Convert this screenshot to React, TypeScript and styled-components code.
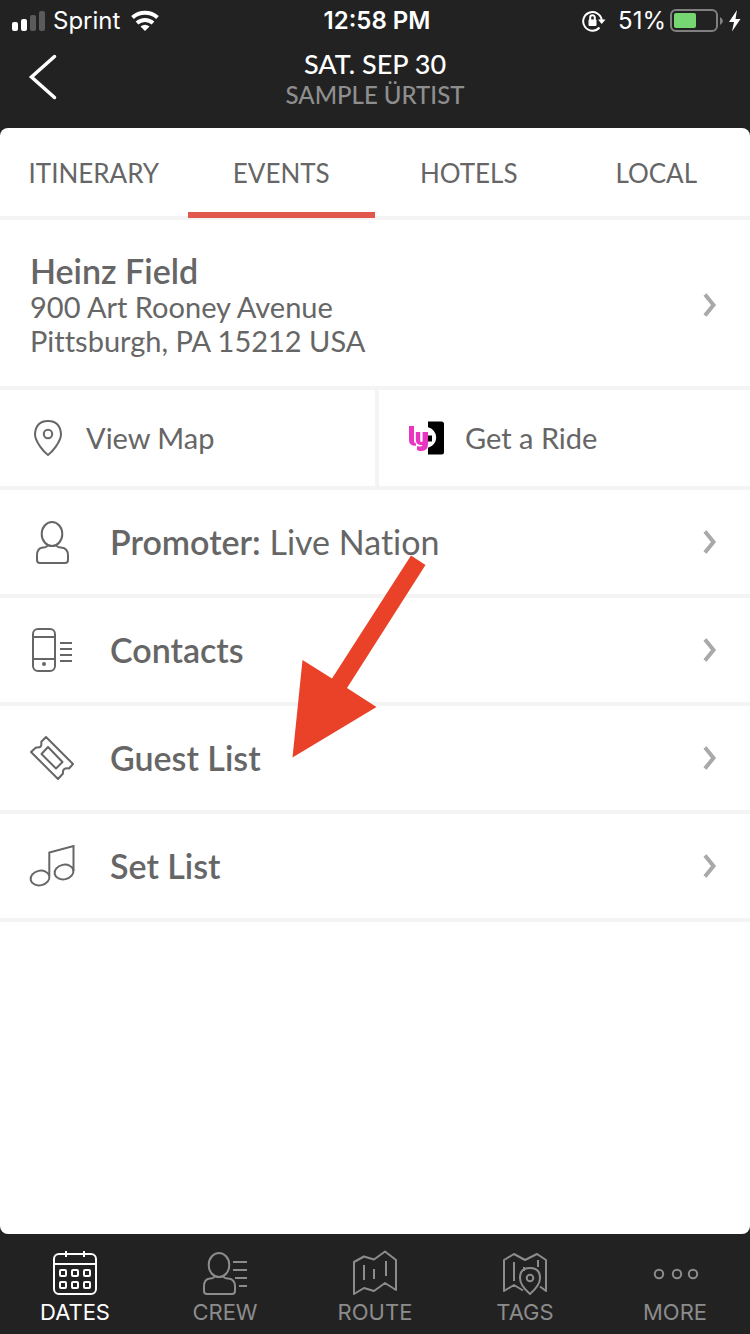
import React from "react";
import styled, { createGlobalStyle } from "styled-components";

const GlobalStyle = createGlobalStyle`
  * { box-sizing: border-box; }
  body {
    margin: 0;
    background: #222;
    color: #666;
    font-family: Lato, "Liberation Sans", sans-serif;
    font-variant-ligatures: none;
  }
  a { color: inherit; text-decoration: none; }
  svg { display: block; flex: none; }
`;

const Screen = styled.div`
  display: flex;
  flex-direction: column;
  min-height: 100vh;
`;

const StatusBar = styled.div`
  display: grid;
  grid-template-columns: 1fr auto 1fr;
  align-items: center;
  height: 40px;
  padding: 2px 8px 0 12px;
  color: #fff;
  font: 400 24px/38px Inter, sans-serif;
`;

const StatusGroup = styled.div<{ $end?: boolean }>`
  display: flex;
  align-items: center;
  gap: ${(p) => (p.$end ? 4 : 8)}px;
  justify-content: ${(p) => (p.$end ? "flex-end" : "flex-start")};
`;

const Clock = styled.time`
  font-weight: 600;
`;

const BatteryLevel = styled.span`
  padding-left: 8px;
`;

const Header = styled.header`
  display: grid;
  grid-template-columns: 1fr auto 1fr;
  height: 88px;
  padding: 8px 28px 0;
`;

const BackButton = styled.button`
  justify-self: start;
  align-self: start;
  padding: 6px 0;
  border: 0;
  background: none;
  color: #fff;
`;

const Heading = styled.div`
  text-align: center;
`;

const Title = styled.h1`
  margin: 0;
  color: #fff;
  font-size: 27px;
  font-weight: 500;
  line-height: 32px;
`;

const Subtitle = styled.p`
  margin: 0;
  color: #8e8e8e;
  font-size: 24px;
  font-weight: 500;
  line-height: 30px;
`;

const Panel = styled.main`
  flex: 1;
  border-radius: 8px;
  background: #fff;
  overflow: hidden;
`;

const Tabs = styled.div`
  display: flex;
  height: 92px;
  border-bottom: 4px solid #f4f4f4;
`;

const Tab = styled.button<{ $active?: boolean }>`
  flex: 1 1 0;
  height: 90px;
  padding: 6px 0 0;
  border: 0;
  border-bottom: 6px solid ${(p) => (p.$active ? "#e2574c" : "transparent")};
  background: none;
  color: #666;
  font: 400 26px/32px Lato, sans-serif;
`;

const Venue = styled.a`
  display: flex;
  align-items: center;
  justify-content: space-between;
  padding: 32px 32px 28px 30px;
  border-bottom: 4px solid #f4f4f4;
`;

const VenueName = styled.h2`
  margin: 0;
  font-size: 34px;
  font-weight: 600;
  line-height: 38px;
`;

const Address = styled.address`
  font-size: 29px;
  font-style: normal;
  line-height: 34px;
`;

const Actions = styled.div`
  display: grid;
  grid-template-columns: 1fr 1fr;
  border-bottom: 4px solid #f4f4f4;
`;

const Action = styled.a`
  display: flex;
  align-items: center;
  gap: 20px;
  height: 96px;
  padding-left: 30px;
  font-size: 29px;
  line-height: 34px;

  & + & {
    border-left: 4px solid #f4f4f4;
  }
`;

const List = styled.nav`
  position: relative;
`;

const Row = styled.a`
  display: flex;
  align-items: center;
  height: 108px;
  padding: 0 32px 0 28px;
  border-bottom: 4px solid #f4f4f4;
`;

const RowLabel = styled.span`
  flex: 1;
  padding-left: 34px;
  font-size: 34px;
  font-weight: 600;
  line-height: 40px;
`;

const RowValue = styled.span`
  font-weight: 400;
`;

const Pointer = styled.svg`
  position: absolute;
  top: 64px;
  left: 290px;
  pointer-events: none;
`;

const TabBar = styled.nav`
  display: flex;
  height: 100px;
`;

const TabBarItem = styled.a<{ $active?: boolean }>`
  flex: 1 1 0;
  display: flex;
  flex-direction: column;
  align-items: center;
  padding-top: 16px;
  color: ${(p) => (p.$active ? "#fff" : "#8c8c8c")};
  font: 400 22px/28px Inter, sans-serif;
`;

const Icon = ({ children, size = 48, weight = 2 }: { children: React.ReactNode; size?: number; weight?: number }) => (
  <svg width={size} height={size} viewBox={`0 0 ${size} ${size}`} fill="none" stroke="currentColor" strokeWidth={weight} aria-hidden="true">
    {children}
  </svg>
);

const Chevron = () => (
  <svg width="16" height="28" viewBox="0 0 16 28" fill="none" stroke="#a9a9a9" strokeWidth="4" aria-hidden="true">
    <path d="M3 3.5 11.5 14 3 24.5" />
  </svg>
);

const PersonIcon = () => (
  <Icon>
    <ellipse cx="24" cy="16" rx="10.3" ry="12" />
    <path d="M20 27q-1 2.500-5 2.500-6 .500-6 8v4.500q0 3 3 3h25q3 0 3-3v-4.500q0-7.500-7-8-4 0-5-2.500" />
  </Icon>
);

const PhoneIcon = () => (
  <Icon>
    <rect x="5" y="3" width="22" height="42" rx="5" />
    <path d="M5 11h22M5 33h22M32 17h12M32 23h12M32 29h12M32 35h12" />
    <circle cx="16" cy="38" r="2" fill="currentColor" stroke="none" />
  </Icon>
);

const TicketIcon = () => (
  <Icon>
    <path strokeLinejoin="round" d="M18 3 45 30l-4 4.500q-3.500-.5-5 .8-1.400 1.400-1 4.200L30 45 3 18l5-4.500q3.500.3 4.500-.7 1.200-1.200.8-5Z" />
    <path strokeLinejoin="round" d="m20 13-6.500 7L28 34.500l6.500-6.500Z" />
  </Icon>
);

const MusicIcon = () => (
  <Icon>
    <ellipse cx="12" cy="36" rx="9.500" ry="7.300" transform="rotate(-12 12 36)" />
    <ellipse cx="36" cy="30" rx="9.500" ry="7.300" transform="rotate(-12 36 30)" />
    <path d="M21.300 34V10.500L45.500 4v25" />
  </Icon>
);

const PinIcon = () => (
  <Icon size={36}>
    <path strokeLinejoin="round" d="M18 35C14.500 32.500 5 22 5 14Q6 1 18 1t13 13c0 8-9.500 18.500-13 21Z" />
    <circle cx="18" cy="14" r="4.200" />
  </Icon>
);

const RideIcon = () => (
  <Icon size={36}>
    <path d="M19 1.500h13.500q2.500 0 2.500 2.500v28q0 2.500-2.500 2.500H19v-6.800a10.500 10.500 0 0 0 0-20.500Z" fill="#000" stroke="none" />
    <path d="M17 15.500h6v6h-6Z" fill="#000" stroke="none" />
    <path d="M0 6h5v15q0 2 2 2.500v2.300Q0 26 0 20ZM6.800 12h4.400v8.500q0 1.500 1.200 1.500t1.200-1.500V12H19v12q0 7-6.500 7-4 0-4.500-1.500V26q5 1.500 5.500-1-6.700.5-6.700-5.500Z" fill="#ea35c0" stroke="none" />
  </Icon>
);

const CalendarIcon = () => (
  <Icon>
    <rect x="3" y="4" width="42" height="40" rx="5" />
    <path d="M3 14h42M15 1v6M33 1v6" />
    {[9, 21, 33].map((x) => (
      <React.Fragment key={x}>
        <rect x={x} y="20" width="6" height="6" rx="1" />
        <rect x={x} y="32" width="6" height="6" rx="1" />
      </React.Fragment>
    ))}
  </Icon>
);

const CrewIcon = () => (
  <Icon>
    <ellipse cx="18" cy="15" rx="10.300" ry="12" />
    <path d="M14 26q-1 2.500-5 2.500-6 .5-6 8V41q0 3 3 3h25q3 0 3-3v-4.500q0-7.500-7-8-4 0-5-2.500M32 12h14M32 20h14M34 28h12M38 36h8" />
  </Icon>
);

const RouteIcon = () => (
  <Icon>
    <path strokeLinejoin="round" d="M3 12 13 6.500l10 3L34 1.500 45 10v30l-11-7-11 8-10-3L3 44ZM13 15v15M23 19v10M35 11v15" />
  </Icon>
);

const TagsIcon = () => (
  <Icon>
    <path strokeLinejoin="round" d="M22 40.500 13 35 3 41V10l10-6 11 6 12-6 9 6v31l-6-4.500M13 12v19M23 17v4M37 10v7" />
    <path strokeLinejoin="round" d="M29 44C25.500 41 19 34 19 28q0-10 10-10t10 10c0 6-6.500 13-10 16Z" />
    <circle cx="29" cy="28" r="3.300" />
  </Icon>
);

const MoreIcon = () => (
  <Icon>
    <circle cx="8" cy="24" r="4.200" />
    <circle cx="26" cy="24" r="4.200" />
    <circle cx="42" cy="24" r="4.200" />
  </Icon>
);

const rows = [
  { label: "Promoter:", value: "Live Nation", icon: <PersonIcon /> },
  { label: "Contacts", icon: <PhoneIcon /> },
  { label: "Guest List", icon: <TicketIcon /> },
  { label: "Set List", icon: <MusicIcon /> },
];

const destinations = [
  { label: "DATES", icon: <CalendarIcon /> },
  { label: "CREW", icon: <CrewIcon /> },
  { label: "ROUTE", icon: <RouteIcon /> },
  { label: "TAGS", icon: <TagsIcon /> },
  { label: "MORE", icon: <MoreIcon /> },
];

export default function App() {
  return (
    <Screen>
      <GlobalStyle />
      <StatusBar>
        <StatusGroup>
          <svg width="33" height="20" viewBox="0 0 33 20" fill="#fff" aria-hidden="true">
            <rect y="11" width="6" height="9" rx="2" />
            <rect x="9" y="8" width="6" height="12" rx="2" />
            <rect x="18" y="4" width="6" height="16" rx="2" fill="#5b5b5b" />
            <rect x="27" y="0" width="6" height="20" rx="2" fill="#5b5b5b" />
          </svg>
          <span>Sprint</span>
          <svg width="36" height="22" viewBox="0 0 36 22" fill="none" stroke="#fff" strokeWidth="4" aria-hidden="true">
            <path d="M4.500 7.500a19 19 0 0 1 25 0M9 13a12 12 0 0 1 16 0" />
            <path d="M17 21l-4.500-4.500q4.500-3.500 9 0Z" fill="#fff" stroke="none" />
          </svg>
        </StatusGroup>
        <Clock>12:58 PM</Clock>
        <StatusGroup $end>
          <svg width="24" height="22" viewBox="0 0 24 22" fill="none" stroke="#fff" strokeWidth="2" aria-hidden="true">
            <path d="M17.500 17.500A9.300 9.300 0 1 1 19.700 10" />
            <path d="M16 9.500h7.500L19.700 14Z" fill="#fff" stroke="none" />
            <rect x="6.500" y="9.500" width="8" height="6.500" rx="1" fill="#fff" stroke="none" />
            <path d="M8.200 10V7.500a2.300 2.300 0 0 1 4.600 0V10" />
          </svg>
          <BatteryLevel>51%</BatteryLevel>
          <svg width="72" height="26" viewBox="0 0 72 26" aria-hidden="true">
            <rect x="1" y="2" width="46" height="21" rx="5" fill="none" stroke="#808080" strokeWidth="2" />
            <path d="M50 9q6 4 0 8Z" fill="#808080" />
            <rect x="4" y="5" width="22" height="15" rx="2" fill="#76d672" />
            <path d="M67 2 59 14h5l-2 9.500L70.500 11H65.500Z" fill="#fff" />
          </svg>
        </StatusGroup>
      </StatusBar>

      <Header>
        <BackButton type="button" aria-label="Back">
          <svg width="30" height="46" viewBox="0 0 30 46" fill="none" stroke="currentColor" strokeWidth="3.500" strokeLinecap="round" aria-hidden="true">
            <path d="M26.500 2.500 3.500 23l23 20.500" />
          </svg>
        </BackButton>
        <Heading>
          <Title>SAT. SEP 30</Title>
          <Subtitle>SAMPLE ÜRTIST</Subtitle>
        </Heading>
      </Header>

      <Panel>
        <Tabs role="tablist">
          {["ITINERARY", "EVENTS", "HOTELS", "LOCAL"].map((name) => (
            <Tab key={name} type="button" role="tab" aria-selected={name === "EVENTS"} $active={name === "EVENTS"}>
              {name}
            </Tab>
          ))}
        </Tabs>
        <Venue href="#venue">
          <div>
            <VenueName>Heinz Field</VenueName>
            <Address>
              900 Art Rooney Avenue
              <br />
              Pittsburgh, PA 15212 USA
            </Address>
          </div>
          <Chevron />
        </Venue>
        <Actions>
          <Action href="#map">
            <PinIcon />
            View Map
          </Action>
          <Action href="#ride">
            <RideIcon />
            Get a Ride
          </Action>
        </Actions>
        <List>
          {rows.map((row) => (
            <Row key={row.label} href="#details">
              {row.icon}
              <RowLabel>
                {row.label}
                {row.value && <RowValue> {row.value}</RowValue>}
              </RowLabel>
              <Chevron />
            </Row>
          ))}
          <Pointer width="140" height="206" viewBox="0 0 140 206" aria-hidden="true">
            <path d="M2.500 203.500 12.500 106 42 124.500 121 1.500 135.500 11 57 134l29.500 19Z" fill="#ea4228" />
          </Pointer>
        </List>
      </Panel>

      <TabBar>
        {destinations.map((item, i) => (
          <TabBarItem key={item.label} href={`#${item.label.toLowerCase()}`} $active={i === 0}>
            {item.icon}
            {item.label}
          </TabBarItem>
        ))}
      </TabBar>
    </Screen>
  );
}
